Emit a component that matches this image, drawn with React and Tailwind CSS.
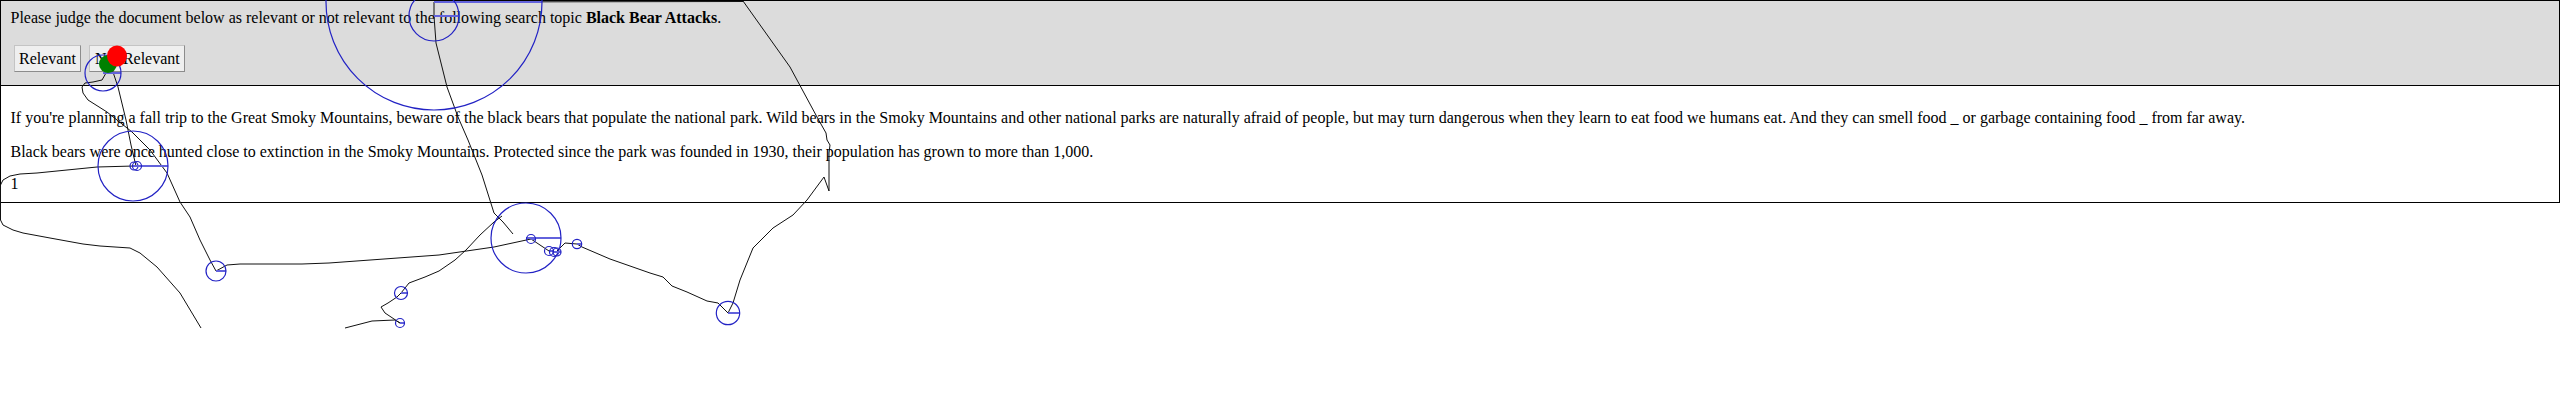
import React from "react";

// mouse trace drawn over the judged page
const paths = [
  "M201,328 L180,293 L157,267 L140,253 L130,248 L100,246 L83,244 L50,238 L23,233 L13,230 L3,225 L0.5,220 L0.5,185 L3,180 L10,176 L20,174 L37,173 L67,170 L97,167 L134,166",
  "M110,63 L118,87 L126,120 L131,145 L136,166",
  "M104,63 L106,73 L102,80 L93,82 L85,83 L82,87 L83,93 L88,100 L107,112 L132,132 L150,150 L167,173 L180,202 L190,217 L200,240 L210,260 L216,271",
  "M216,271 L227,265 L240,264 L302,264 L329,263 L384,259 L439,255 L494,247 L531,239",
  "M531,239 L549,251 L556,252 L565,243 L577,244 L582,247 L610,259 L650,273 L663,277 L672,286 L687,292 L707,301 L718,303 L725,310 L728,313",
  "M728,313 L733,303 L740,280 L753,248 L773,228 L793,215 L807,200 L824,177 L829,191 L829,153 L830,145 L827,140 L826,133 L817,117 L790,67 L743,1",
  "M743,1.5 L434,2 L434,16 L436,43 L447,87 L458,117 L468,140 L482,175 L494,213 L503,222 L513,234",
  "M345,328 L372,321 L395,320 L400,323 L385,313 L381,307 L388,303 L397,297 L401,293 L409,283 L425,277 L439,271 L455,260 L466,250 L480,235 L494,222 L502,216",
];

const circles = [
  [434, 2, 108],
  [434, 16, 25],
  [103, 73, 18],
  [133, 166, 35],
  [134, 166, 4],
  [137, 166, 4.5],
  [216, 271, 10],
  [526, 238, 35],
  [531, 239, 4.5],
  [549, 251, 4.5],
  [554, 252, 4.5],
  [557, 252, 4],
  [577, 244, 4.7],
  [728, 313, 11.7],
  [401, 293, 6.5],
  [400, 323, 4.5],
];

const Trace = () => (
  <svg className="absolute left-0 top-0 pointer-events-none" width="2560" height="400" viewBox="0 0 2560 400">
    {paths.map((d, i) => (
      <path key={i} d={d} fill="none" stroke="#111" strokeWidth="1" />
    ))}
    {circles.map(([cx, cy, r], i) => (
      <g key={i}>
        <line x1={cx} y1={cy} x2={cx + r} y2={cy} stroke="#6262dc" strokeWidth="2" />
        <circle cx={cx} cy={cy} r={r} fill="none" stroke="#2222c4" strokeWidth="1.2" />
      </g>
    ))}
    <circle cx="108" cy="64" r="9" fill="#008000" />
    <ellipse cx="117" cy="56" rx="10" ry="10.5" fill="#ff0000" />
  </svg>
);

const Button = ({ children }) => (
  <button className="h-[27px] px-[4.5px] bg-[#efefef] border border-[#c4c4c4] border-r-[#8c8c8c] border-b-[#8c8c8c] text-black text-base leading-none">
    {children}
  </button>
);

export default function App() {
  return (
    <div className="relative w-[2560px] h-[400px] bg-white text-black font-['Liberation_Serif',_'Times_New_Roman',_serif]">
      <div className="h-[85px] bg-[#dcdcdc] border border-b-0 border-black pt-[7.5px] pl-[9.5px]">
        <p className="text-base leading-[18.4px]">
          Please judge the document below as relevant or not relevant to the following search topic{" "}
          <b>Black Bear Attacks</b>.
        </p>
        <div className="flex gap-[8px] mt-[18.5px] ml-[3px]">
          <Button>Relevant</Button>
          <Button>Not Relevant</Button>
        </div>
      </div>
      <div className="h-[118px] border border-black pt-[7px] pl-[9.5px] text-base leading-[18.4px]">
        <p className="mt-4">
          If you're planning a fall trip to the Great Smoky Mountains, beware of the black bears that populate the national park. Wild bears in the Smoky Mountains and other national parks are naturally afraid of people, but may turn dangerous when they learn to eat food we humans eat. And they can smell food _ or garbage containing food _ from far away.
        </p>
        <p className="mt-4">
          Black bears were once hunted close to extinction in the Smoky Mountains. Protected since the park was founded in 1930, their population has grown to more than 1,000.
        </p>
        <div className="mt-[13px]">1</div>
      </div>
      <Trace />
    </div>
  );
}
